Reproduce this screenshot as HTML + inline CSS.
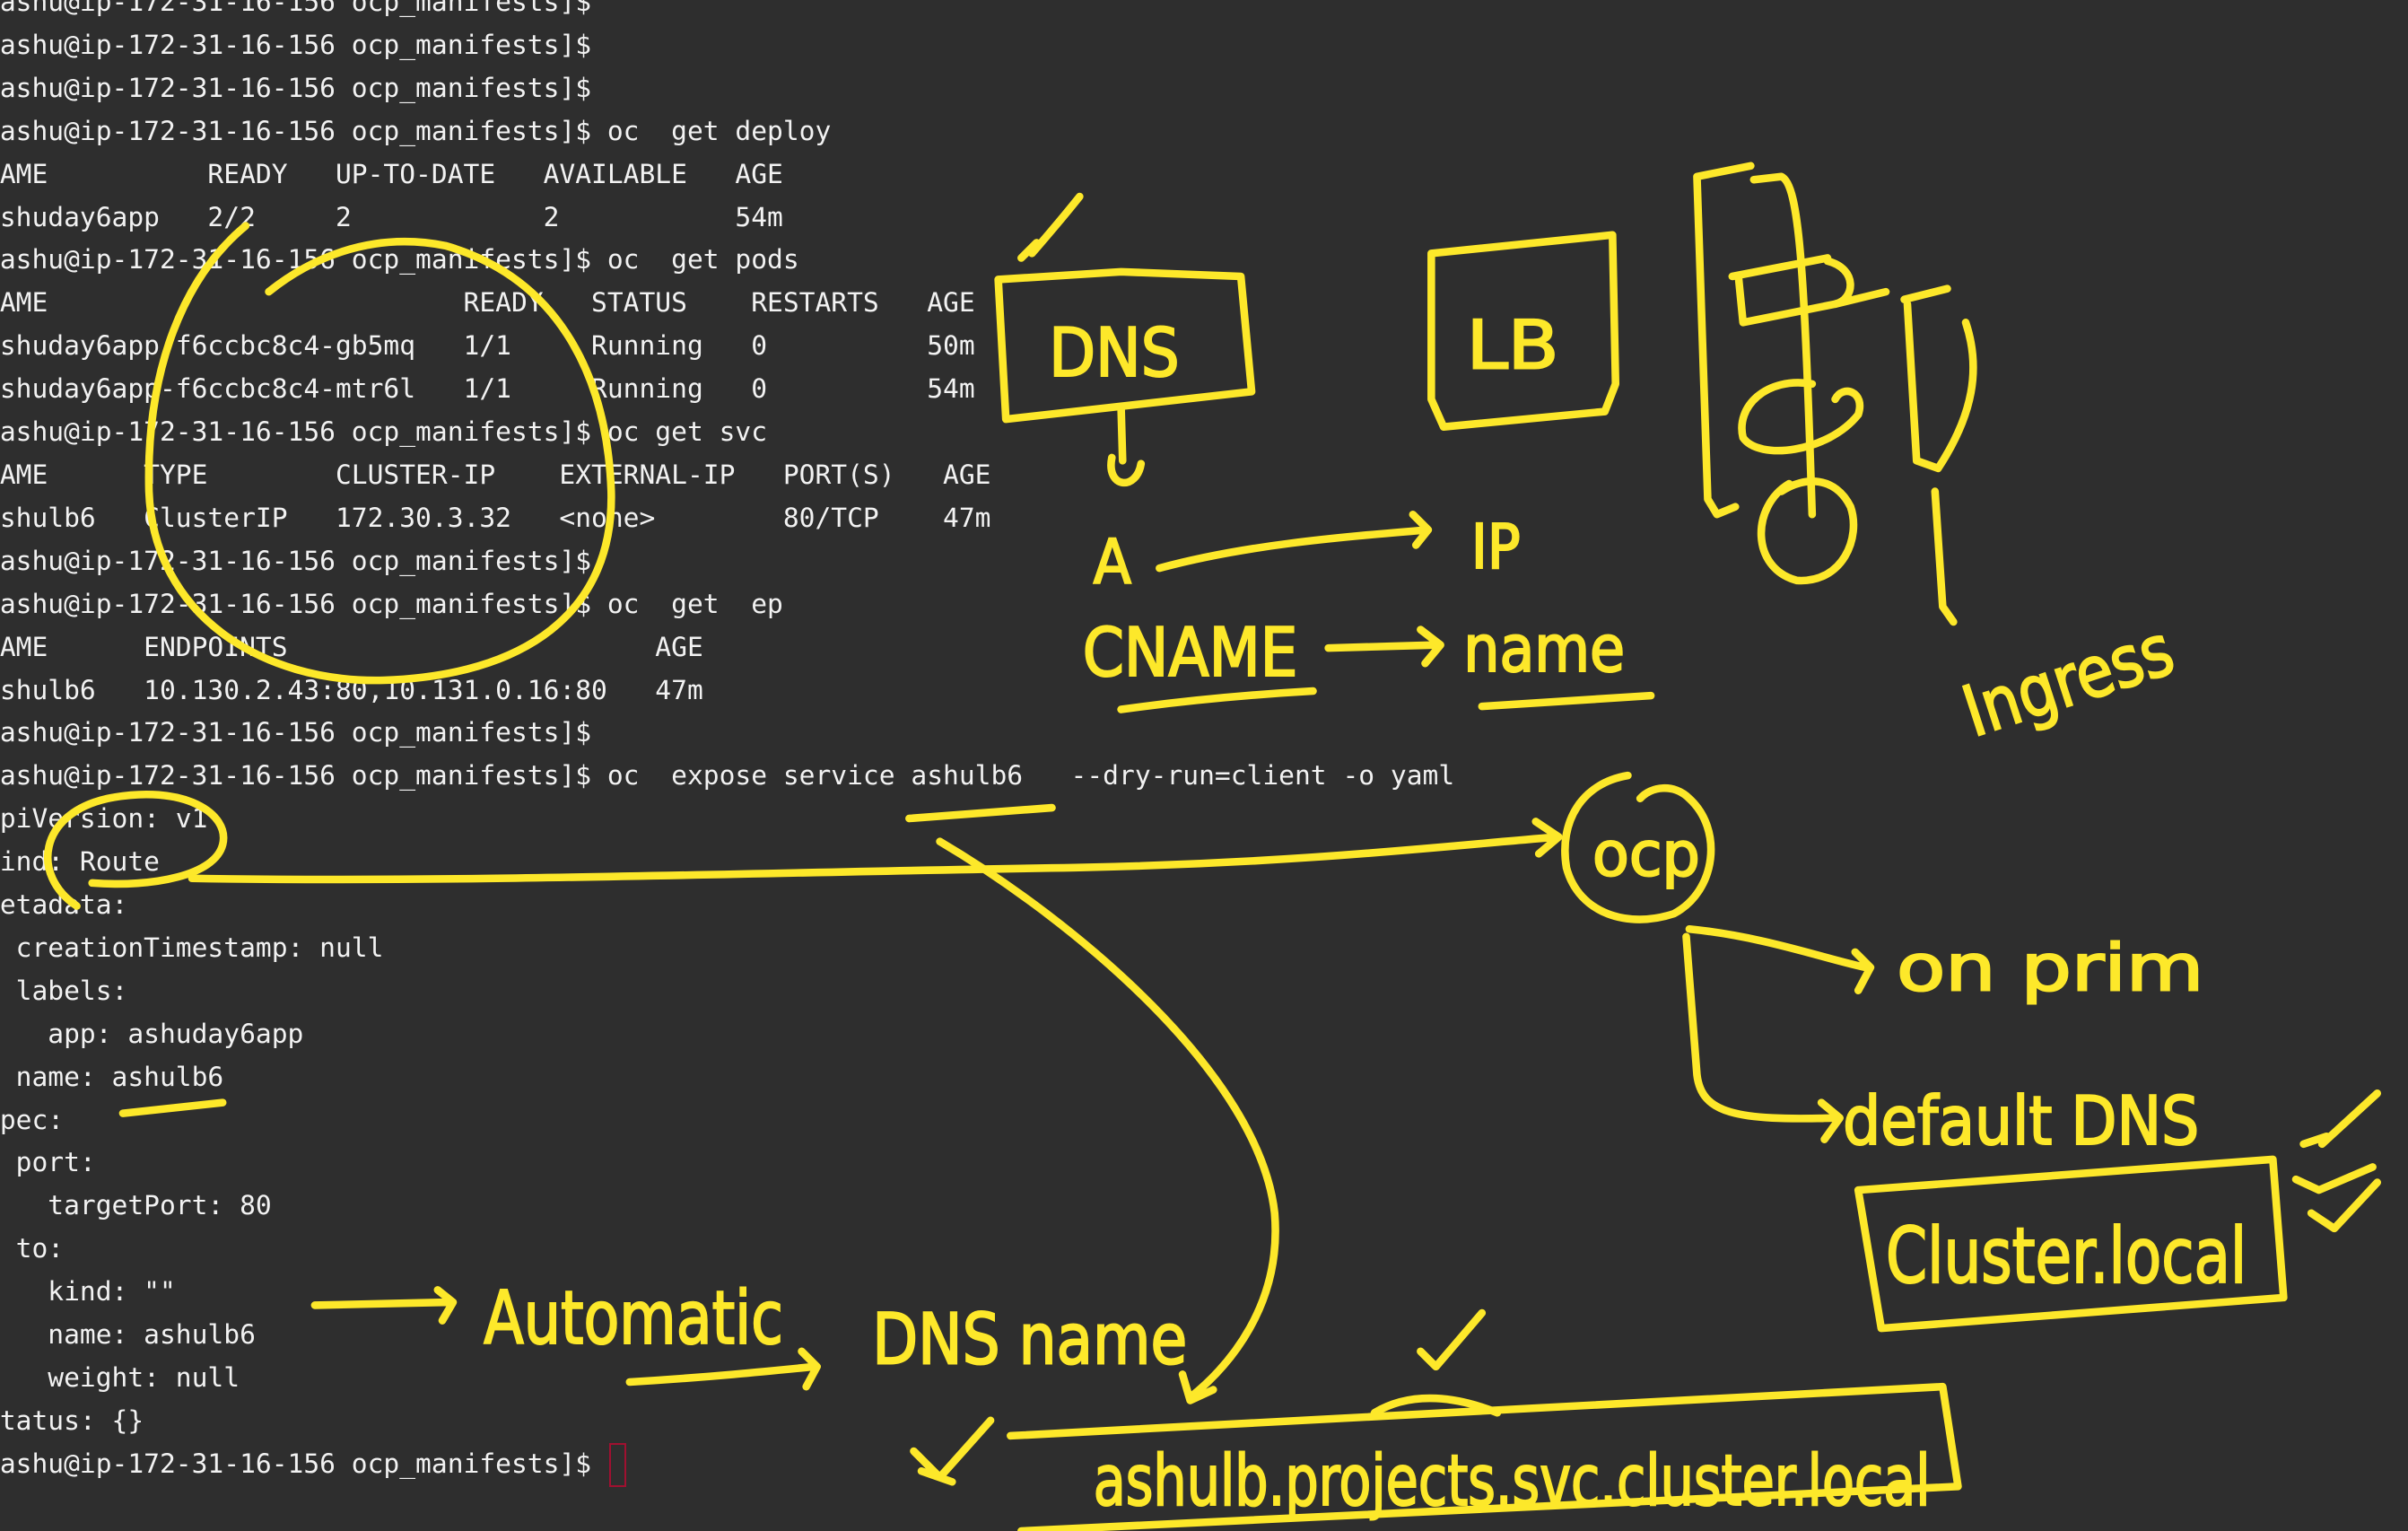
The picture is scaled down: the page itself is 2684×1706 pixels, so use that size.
<!DOCTYPE html>
<html><head><meta charset="utf-8"><style>
html,body{margin:0;padding:0;}
body{width:2684px;height:1706px;background:#2e2e2e;overflow:hidden;position:relative;}
pre{position:absolute;left:-18px;top:-21px;margin:0;font-family:"DejaVu Sans Mono","Liberation Mono",monospace;font-size:29.6px;line-height:47.9px;color:#f2f2f2;white-space:pre;}
.cur{position:absolute;left:679px;top:1608px;width:15px;height:45px;border:2px solid #a01030;}
svg{position:absolute;left:0;top:0;}
svg text{font-family:"Liberation Sans Narrow","DejaVu Sans Condensed","Liberation Sans",sans-serif;font-weight:normal;fill:#fde82a;stroke:#fde82a;stroke-width:1.2;}
</style></head><body>
<pre>[ashu@ip-172-31-16-156 ocp_manifests]$
[ashu@ip-172-31-16-156 ocp_manifests]$
[ashu@ip-172-31-16-156 ocp_manifests]$
[ashu@ip-172-31-16-156 ocp_manifests]$ oc  get deploy
NAME          READY   UP-TO-DATE   AVAILABLE   AGE
ashuday6app   2/2     2            2           54m
[ashu@ip-172-31-16-156 ocp_manifests]$ oc  get pods
NAME                          READY   STATUS    RESTARTS   AGE
ashuday6app-f6ccbc8c4-gb5mq   1/1     Running   0          50m
ashuday6app-f6ccbc8c4-mtr6l   1/1     Running   0          54m
[ashu@ip-172-31-16-156 ocp_manifests]$ oc get svc
NAME      TYPE        CLUSTER-IP    EXTERNAL-IP   PORT(S)   AGE
ashulb6   ClusterIP   172.30.3.32   &lt;none&gt;        80/TCP    47m
[ashu@ip-172-31-16-156 ocp_manifests]$
[ashu@ip-172-31-16-156 ocp_manifests]$ oc  get  ep
NAME      ENDPOINTS                       AGE
ashulb6   10.130.2.43:80,10.131.0.16:80   47m
[ashu@ip-172-31-16-156 ocp_manifests]$
[ashu@ip-172-31-16-156 ocp_manifests]$ oc  expose service ashulb6   --dry-run=client -o yaml
apiVersion: v1
kind: Route
metadata:
  creationTimestamp: null
  labels:
    app: ashuday6app
  name: ashulb6
spec:
  port:
    targetPort: 80
  to:
    kind: ""
    name: ashulb6
    weight: null
status: {}
[ashu@ip-172-31-16-156 ocp_manifests]$</pre>
<div class="cur"></div>
<svg width="2684" height="1706" viewBox="0 0 1568 997" preserveAspectRatio="none">
<g fill="none" stroke="#fde82a" stroke-width="5" stroke-linecap="round" stroke-linejoin="round">
<path d="M160 147 C120 180 95 240 97 320 C100 400 170 445 250 443 C340 440 400 400 398 320 C395 240 360 180 290 160 C240 150 200 170 175 190"/>
<path d="M50 590 C20 570 25 530 70 520 C120 510 150 530 145 550 C140 570 100 578 60 575"/>
<path d="M125 572 C300 575 500 568 700 565 C850 562 950 550 1015 545 M1000 535 L1015 545 L1002 556"/>
<path d="M592 533 L685 526"/>
<path d="M80 725 L145 718"/>
<path d="M612 548 C700 600 820 700 830 790 C835 850 800 890 775 910 M770 895 L775 912 L790 905"/>
<path d="M665 168 L675 158 M672 165 C685 150 695 138 703 128"/>
<path d="M650 182 L730 177 L808 180 L815 255 L655 273 Z"/>
<path d="M730 265 L731 300 M724 298 C720 318 740 320 743 302"/>
<path d="M755 370 C810 355 870 350 930 345 M920 335 L930 345 L922 355"/>
<path d="M932 165 L1050 153 L1052 250 L1045 268 L940 278 L932 260 Z"/>
<path d="M730 462 C780 455 820 452 855 450"/>
<path d="M865 422 L935 420 M925 410 L938 420 L928 432"/>
<path d="M965 460 L1075 453"/>
<path d="M1105 115 L1140 108 M1142 117 L1160 115 C1172 120 1175 180 1180 335 M1105 115 L1112 325 L1118 335 L1130 330"/>
<path d="M1128 180 L1190 168 M1132 180 L1135 210 L1160 205 L1195 198 L1228 190"/>
<path d="M1190 170 C1210 175 1208 195 1195 198"/>
<path d="M1180 250 C1150 245 1130 265 1135 285 C1145 300 1190 295 1210 270 C1215 255 1200 250 1195 260"/>
<path d="M1165 315 C1140 330 1140 370 1170 378 C1200 380 1212 350 1205 330 C1195 310 1175 310 1160 320"/>
<path d="M1240 195 L1268 188 M1242 198 L1248 300 L1262 305 C1285 270 1290 240 1280 210"/>
<path d="M1260 320 L1265 395 L1272 405"/>
<path d="M1060 505 C1030 510 1015 535 1020 565 C1028 595 1060 605 1090 595 C1118 580 1122 540 1100 520 C1090 510 1075 512 1068 520"/>
<path d="M1100 605 C1150 610 1190 625 1215 630 M1208 620 L1218 630 L1210 645"/>
<path d="M1098 610 L1105 700 C1108 725 1130 730 1195 728 M1186 718 L1198 728 L1188 742"/>
<path d="M1210 775 L1480 755 L1487 845 L1225 865 Z"/>
<path d="M1500 745 L1515 740 M1512 745 L1548 712 M1495 768 L1510 775 L1545 760 M1505 790 L1520 800 L1548 770"/>
<path d="M205 850 L292 848 M285 840 L295 848 L288 860"/>
<path d="M410 900 C460 897 500 893 530 890 M522 880 L532 890 L525 903"/>
<path d="M925 880 L935 890 L965 855"/>
<path d="M895 920 C920 905 950 910 975 920"/>
<path d="M658 935 L1265 903 L1275 968 L665 997"/>
<path d="M595 945 L612 962 L645 925 M600 958 L620 965"/>
</g>
<text x="683" y="245" font-size="44" textLength="85" lengthAdjust="spacingAndGlyphs">DNS</text>
<text x="955" y="240" font-size="44" textLength="60" lengthAdjust="spacingAndGlyphs">LB</text>
<text x="712" y="380" font-size="40">A</text>
<text x="958" y="370" font-size="40" textLength="32" lengthAdjust="spacingAndGlyphs">IP</text>
<text x="705" y="440" font-size="44" textLength="140" lengthAdjust="spacingAndGlyphs">CNAME</text>
<text x="953" y="437" font-size="42" textLength="105" lengthAdjust="spacingAndGlyphs">name</text>
<text x="1285" y="480" font-size="46" textLength="140" lengthAdjust="spacingAndGlyphs" transform="rotate(-18 1285 480)">Ingress</text>
<text x="1037" y="570" font-size="40" textLength="70" lengthAdjust="spacingAndGlyphs">ocp</text>
<text x="1235" y="645" font-size="42" textLength="200" lengthAdjust="spacingAndGlyphs">on prim</text>
<text x="1200" y="745" font-size="44" textLength="232" lengthAdjust="spacingAndGlyphs">default DNS</text>
<text x="1228" y="835" font-size="50" textLength="235" lengthAdjust="spacingAndGlyphs">Cluster.local</text>
<text x="315" y="875" font-size="48" textLength="195" lengthAdjust="spacingAndGlyphs">Automatic</text>
<text x="568" y="888" font-size="46" textLength="205" lengthAdjust="spacingAndGlyphs">DNS name</text>
<text x="712" y="980" font-size="46" textLength="545" lengthAdjust="spacingAndGlyphs">ashulb.projects.svc.cluster.local</text>
</svg>
</body></html>
